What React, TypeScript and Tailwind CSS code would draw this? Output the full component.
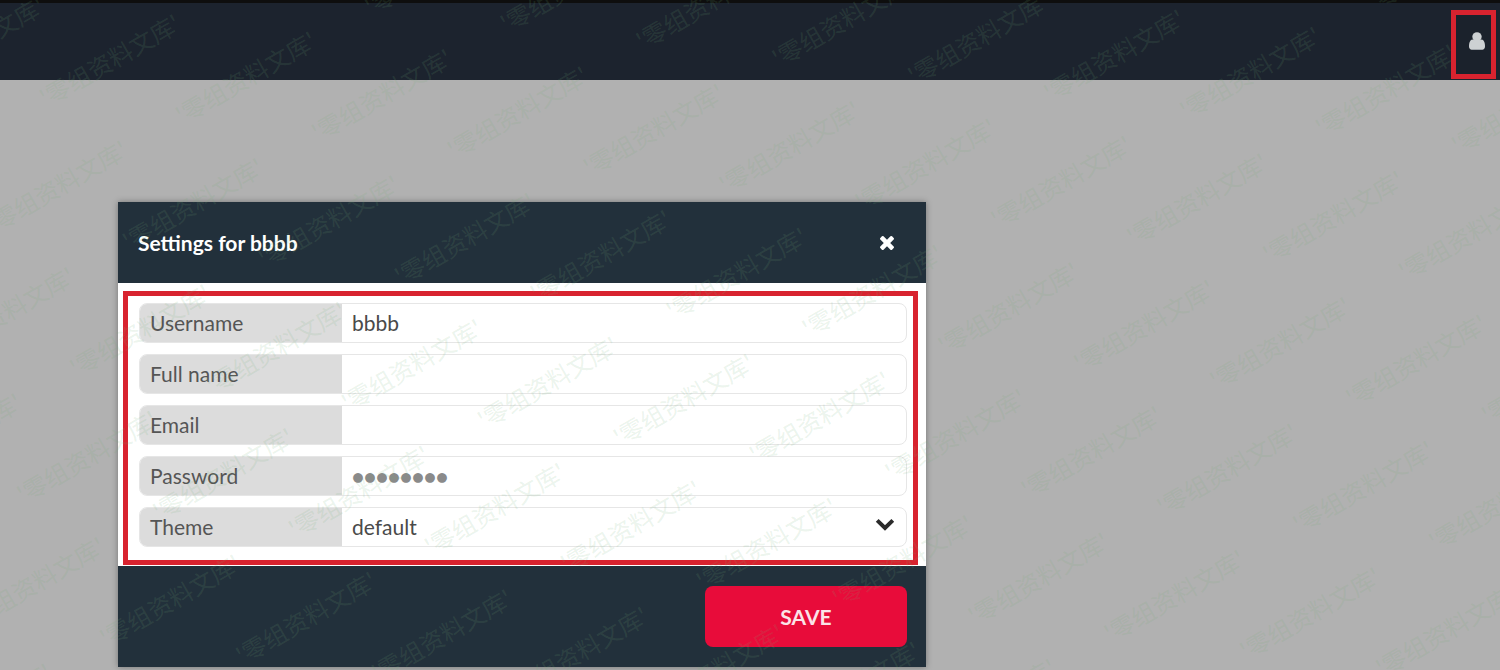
import type { ReactNode } from "react";

const WATERMARK_ROWS = Array.from({ length: 18 }, (_, i) => i);
const WATERMARK_COLUMNS = Array.from({ length: 8 }, (_, i) => i);

function UserIcon() {
  return (
    <svg viewBox="0 128 1280 1408" className="h-5 w-4" fill="currentColor" aria-hidden="true">
      <path d="M1280 1271q0 109-62.5 187t-150.5 78h-854q-88 0-150.5-78t-62.5-187q0-85 8.5-160.5t31.5-152 58.5-131 94-89 134.5-34.5q131 128 313 128t313-128q76 0 134.5 34.5t94 89 58.5 131 31.5 152 8.5 160.5z" />
      <circle cx="640" cy="500" r="375" />
    </svg>
  );
}

function CloseIcon() {
  return (
    <svg viewBox="110 366 1188 1188" className="size-3.5" fill="currentColor" aria-hidden="true">
      <path d="M1298 1322q0 40-28 68l-136 136q-28 28-68 28t-68-28l-294-294-294 294q-28 28-68 28t-68-28l-136-136q-28-28-28-68t28-68l294-294-294-294q-28-28-28-68t28-68l136-136q28-28 68-28t68 28l294 294 294-294q28-28 68-28t68 28l136 136q28 28 28 68t-28 68l-294 294 294 294q28 28 28 68z" />
    </svg>
  );
}

function ChevronIcon() {
  return (
    <svg
      viewBox="0 0 20 14"
      className="pointer-events-none absolute top-2.5 right-[11px] h-3.5 w-5 text-[#2b2b2b]"
      fill="none"
      stroke="currentColor"
      strokeWidth="4"
      aria-hidden="true"
    >
      <path d="M2.2 2.4 10 10l7.8-7.6" />
    </svg>
  );
}

function Field({ id, label, children }: { id: string; label: string; children: ReactNode }) {
  return (
    <div className="flex h-10 overflow-hidden rounded-lg border border-[#e6e6e6] bg-white">
      <label htmlFor={id} className="flex w-[202px] shrink-0 items-center bg-[#dcdcdc] pl-2.5 text-[#555]">
        {label}
      </label>
      <div className="relative flex min-w-0 flex-1">{children}</div>
    </div>
  );
}

const control = "w-full min-w-0 appearance-none bg-transparent px-2.5 text-[#4a4a4a] outline-none";

function Watermark() {
  return (
    <div className="pointer-events-none absolute inset-0 overflow-hidden select-none" aria-hidden="true">
      <div className="absolute top-[137px] left-[-440px] origin-top-left -rotate-30 font-['Noto_Sans_CJK_SC',sans-serif] text-2xl text-[rgba(115,175,120,0.15)]">
        {WATERMARK_ROWS.map((row) => (
          <div key={row} className="flex h-[83px] items-center odd:pl-0 even:pl-[109px]">
            {WATERMARK_COLUMNS.map((column) => (
              <span key={column} className="w-[218px] shrink-0 leading-none whitespace-nowrap">
                '零组资料文库'
              </span>
            ))}
          </div>
        ))}
      </div>
    </div>
  );
}

export default function App() {
  return (
    <div className="relative min-h-screen overflow-hidden bg-[#b1b1b1] font-[Lato,sans-serif] text-[21px]">
      <header className="flex justify-end border-t-[3px] border-[#0e0e0e] bg-[#1c232e] pt-[7px] pr-1 pb-px">
        <button
          type="button"
          aria-label="Account"
          className="flex h-[69px] w-[45px] items-start justify-center border-[5px] border-[#d8232f] bg-[#1b222c] pt-4 pl-1.5 text-[#cdd1d3]"
        >
          <UserIcon />
        </button>
      </header>

      <main className="px-[118px] pt-[122px]">
        <form
          className="w-full max-w-[808px] bg-white shadow-[0_0_6px_rgba(0,0,0,0.35)]"
          onSubmit={(event) => event.preventDefault()}
        >
          <div className="flex h-[81px] items-center justify-between bg-[#22303b] pr-8 pl-5 text-white">
            <h1 className="font-bold">Settings for bbbb</h1>
            <button type="button" aria-label="Close">
              <CloseIcon />
            </button>
          </div>

          <div className="pt-2 pr-2 pb-px pl-[5px]">
            <div className="flex flex-col gap-[11px] border-[5px] border-[#d8232f] pt-[7px] pr-1.5 pb-[13px] pl-[11px]">
              <Field id="username" label="Username">
                <input id="username" type="text" defaultValue="bbbb" className={control} />
              </Field>
              <Field id="fullname" label="Full name">
                <input id="fullname" type="text" className={control} />
              </Field>
              <Field id="email" label="Email">
                <input id="email" type="email" className={control} />
              </Field>
              <Field id="password" label="Password">
                <input
                  id="password"
                  type="password"
                  placeholder="●●●●●●●●"
                  className="w-full min-w-0 bg-transparent px-2.5 text-xl outline-none placeholder:text-[#8a8a8a]"
                />
              </Field>
              <Field id="theme" label="Theme">
                <select id="theme" defaultValue="default" className={control}>
                  <option value="default">default</option>
                </select>
                <ChevronIcon />
              </Field>
            </div>
          </div>

          <div className="flex justify-end bg-[#22303b] py-5 pr-[19px]">
            <button type="submit" className="h-[61px] w-[202px] rounded-lg bg-[#e80c3a] font-bold text-[#fbe3e8]">
              SAVE
            </button>
          </div>
        </form>
      </main>

      <Watermark />
    </div>
  );
}
